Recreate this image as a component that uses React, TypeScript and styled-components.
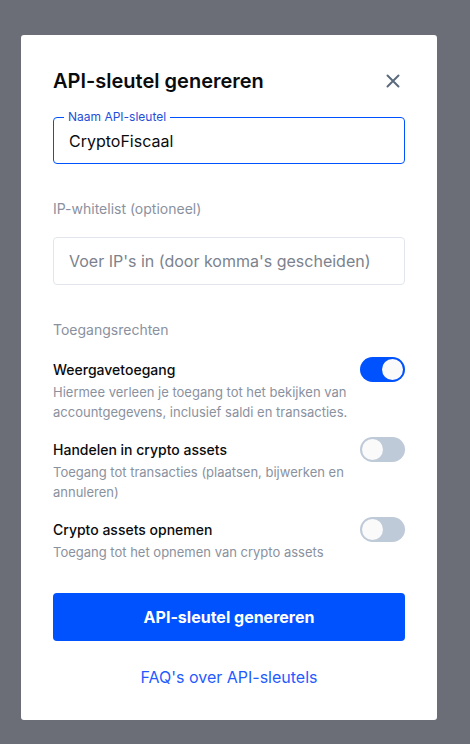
import React, { useState } from 'react';
import styled, { createGlobalStyle } from 'styled-components';

const GlobalStyle = createGlobalStyle`
  html, body {
    margin: 0;
    padding: 0;
    background: #6b6e76;
    font-family: Inter, 'Noto Sans', sans-serif;
  }
  * { box-sizing: border-box; }
`;

interface Permission {
  title: string;
  description: string;
  enabled: boolean;
}

const initialPermissions: Permission[] = [
  {
    title: 'Weergavetoegang',
    description: 'Hiermee verleen je toegang tot het bekijken van accountgegevens, inclusief saldi en transacties.',
    enabled: true,
  },
  {
    title: 'Handelen in crypto assets',
    description: 'Toegang tot transacties (plaatsen, bijwerken en annuleren)',
    enabled: false,
  },
  {
    title: 'Crypto assets opnemen',
    description: 'Toegang tot het opnemen van crypto assets',
    enabled: false,
  },
];

function CloseIcon() {
  return (
    <svg width="14" height="14" viewBox="0 0 14 14" fill="none">
      <path d="M1.5 1.5L12.5 12.5M12.5 1.5L1.5 12.5" stroke="#5b6b7e" strokeWidth="2" strokeLinecap="round" />
    </svg>
  );
}

export default function App() {
  const [name, setName] = useState('CryptoFiscaal');
  const [permissions, setPermissions] = useState(initialPermissions);

  const toggle = (index: number) => {
    setPermissions((prev) => prev.map((p, i) => (i === index ? { ...p, enabled: !p.enabled } : p)));
  };

  return (
    <>
      <GlobalStyle />
      <SPage>
        <SModal>
          <SHeader>
            <STitle>API-sleutel genereren</STitle>
            <SCloseButton aria-label="Sluiten">
              <CloseIcon />
            </SCloseButton>
          </SHeader>

          <SFieldset>
            <SLegend>Naam API-sleutel</SLegend>
            <SNameInput value={name} onChange={(e) => setName(e.target.value)} />
          </SFieldset>

          <SSectionLabel $top={35}>IP-whitelist (optioneel)</SSectionLabel>
          <SPlainInput placeholder="Voer IP's in (door komma's gescheiden)" />

          <SSectionLabel $top={35}>Toegangsrechten</SSectionLabel>
          <SPermissionList>
            {permissions.map((p, i) => (
              <SPermissionRow key={p.title}>
                <SPermissionText>
                  <SPermissionTitle>{p.title}</SPermissionTitle>
                  <SPermissionDesc>{p.description}</SPermissionDesc>
                </SPermissionText>
                <SToggle $on={p.enabled} onClick={() => toggle(i)} aria-pressed={p.enabled}>
                  <SKnob $on={p.enabled} />
                </SToggle>
              </SPermissionRow>
            ))}
          </SPermissionList>

          <SPrimaryButton>API-sleutel genereren</SPrimaryButton>
          <SFaqLink href="#">FAQ's over API-sleutels</SFaqLink>
        </SModal>
      </SPage>
    </>
  );
}

const SPage = styled.div`
  width: 470px;
  height: 744px;
  padding-top: 35px;
  padding-left: 21px;
`;

const SModal = styled.div`
  width: 416px;
  height: 685px;
  background: #ffffff;
  border-radius: 3px;
  padding: 0 32px;
  display: flex;
  flex-direction: column;
`;

const SHeader = styled.div`
  display: flex;
  justify-content: space-between;
  align-items: center;
  height: 32px;
  margin-top: 30px;
`;

const STitle = styled.h2`
  margin: 0;
  font-size: 20px;
  font-weight: 600;
  color: #0a0b0d;
`;

const SCloseButton = styled.button`
  border: none;
  background: none;
  padding: 0;
  margin-right: 5px;
  width: 14px;
  height: 14px;
  display: flex;
  cursor: pointer;
`;

const SFieldset = styled.fieldset`
  margin: 14px 0 0;
  padding: 0 15px;
  height: 53px;
  border: 1px solid #0052ff;
  border-radius: 4px;
`;

const SLegend = styled.legend`
  padding: 0 4px;
  margin-left: -5px;
  font-size: 12px;
  line-height: 12px;
  color: #1f4fd8;
`;

const SNameInput = styled.input`
  width: 100%;
  border: none;
  outline: none;
  padding: 0;
  margin-top: 8px;
  font-family: inherit;
  font-size: 16px;
  color: #0a0b0d;
  background: transparent;
  caret-color: #0a0b0d;
`;

const SSectionLabel = styled.div<{ $top: number }>`
  margin-top: ${(p) => p.$top}px;
  font-size: 14px;
  line-height: 20px;
  color: #8a919e;
`;

const SPlainInput = styled.input`
  margin-top: 18px;
  width: 100%;
  height: 48px;
  border: 1px solid #e2e6ec;
  border-radius: 4px;
  padding: 0 15px;
  font-family: inherit;
  font-size: 16px;
  outline: none;
  &::placeholder {
    color: #7c828d;
  }
`;

const SPermissionList = styled.div`
  margin-top: 20px;
  display: flex;
  flex-direction: column;
  gap: 18px;
`;

const SPermissionRow = styled.div`
  display: flex;
  justify-content: space-between;
  align-items: flex-start;
  gap: 12px;
`;

const SPermissionText = styled.div`
  display: flex;
  flex-direction: column;
  gap: 2px;
`;

const SPermissionTitle = styled.div`
  font-size: 14px;
  font-weight: 500;
  line-height: 20px;
  color: #0a0b0d;
`;

const SPermissionDesc = styled.div`
  font-size: 13px;
  line-height: 20px;
  color: #8a919e;
  max-width: 300px;
`;

const SToggle = styled.button<{ $on: boolean }>`
  flex-shrink: 0;
  width: 45px;
  height: 25px;
  margin-top: -3px;
  border: none;
  border-radius: 13px;
  padding: 2px;
  background: ${(p) => (p.$on ? '#0052ff' : '#bfcad8')};
  display: flex;
  justify-content: ${(p) => (p.$on ? 'flex-end' : 'flex-start')};
  cursor: pointer;
`;

const SKnob = styled.span<{ $on: boolean }>`
  width: 21px;
  height: 21px;
  border-radius: 50%;
  background: #fafafa;
`;

const SPrimaryButton = styled.button`
  margin-top: 31px;
  width: 100%;
  height: 48px;
  border: none;
  border-radius: 4px;
  background: #0052ff;
  color: #ffffff;
  font-family: inherit;
  font-size: 16px;
  font-weight: 700;
  cursor: pointer;
`;

const SFaqLink = styled.a`
  margin-top: 26px;
  align-self: center;
  font-size: 16px;
  line-height: 20px;
  color: #1f5bff;
  text-decoration: none;
`;
